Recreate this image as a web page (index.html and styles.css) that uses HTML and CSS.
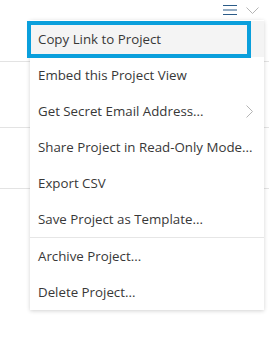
FILE: index.html
```html
<!DOCTYPE html>
<html lang="en">

<head>
    <meta charset="UTF-8">
    <meta name="viewport" content="width=device-width, initial-scale=1.0">
    <title>Project menu</title>
    <link rel="stylesheet" href="styles.css">
</head>

<body>
    <div class="toolbar">
        <a href="#" class="menu_btn">
            <svg width="14" height="12" viewBox="0 0 14 12">
                <path d="M0 1.5H14M0 6H14M0 10.5H14" stroke="#2b5b88" stroke-width="1.2" fill="none"/>
            </svg>
        </a>
        <a href="#" class="drop_btn">
            <svg width="13" height="7" viewBox="0 0 13 7">
                <path d="M0.5 0.5L6.5 6.5L12.5 0.5" stroke="#b4b4b4" stroke-width="1" fill="none"/>
            </svg>
        </a>
    </div>

    <div class="rows">
        <div class="row r1"></div>
        <div class="row r2"></div>
        <div class="row r3"></div>
    </div>

    <ul class="menu">
        <li class="item active"><a href="#">Copy Link to Project</a></li>
        <li class="item"><a href="#">Embed this Project View</a></li>
        <li class="item sub">
            <a href="#">Get Secret Email Address...</a>
            <svg class="arrow" width="7" height="13" viewBox="0 0 7 13">
                <path d="M0.5 0.5L6.5 6.5L0.5 12.5" stroke="#b4b4b4" stroke-width="1" fill="none"/>
            </svg>
        </li>
        <li class="item"><a href="#">Share Project in Read-Only Mode...</a></li>
        <li class="item"><a href="#">Export CSV</a></li>
        <li class="item"><a href="#">Save Project as Template...</a></li>
        <li class="sep"></li>
        <li class="item"><a href="#">Archive Project...</a></li>
        <li class="item"><a href="#">Delete Project...</a></li>
        <!-- keyboard focus ring -->
        <li class="focus"></li>
    </ul>
</body>

</html>
```

FILE: styles.css
```css
* {
    margin: 0;
    padding: 0;
    box-sizing: border-box;
}

body {
    background: #fff;
    font-family: "Open Sans", "Noto Sans", sans-serif;
    font-size: 13.3px;
    color: #383838;
}

a {
    color: inherit;
    text-decoration: none;
}

.toolbar {
    height: 20px;
    display: flex;
    justify-content: flex-end;
    align-items: center;
    gap: 9px;
    padding-right: 10px;
}

.toolbar a {
    display: flex;
}

.menu_btn {
    margin-top: -1px;
}

.drop_btn {
    margin-top: 1px;
}

/* page behind the menu */
.row {
    border-bottom: 1px solid #e3e3e3;
}

.r1 {
    height: 42px;
}

.r2 {
    height: 66px;
}

.r3 {
    height: 61px;
}

.menu {
    position: absolute;
    left: 30px;
    top: 20px;
    width: 234px;
    padding-top: 1px;
    background: #fff;
    list-style: none;
    box-shadow: 0 1px 4px rgba(0, 0, 0, 0.18);
}

.item {
    height: 36px;
    display: flex;
    align-items: center;
    justify-content: space-between;
    padding: 0 11px 0 8px;
    white-space: nowrap;
}

.item.active {
    background: #f4f4f4;
}

.sep {
    height: 1px;
    background: #e6e6e6;
}

.focus {
    position: absolute;
    left: -3px;
    top: 1px;
    width: 224px;
    height: 37px;
    border: 4px solid #0a9fdc;
}
```
